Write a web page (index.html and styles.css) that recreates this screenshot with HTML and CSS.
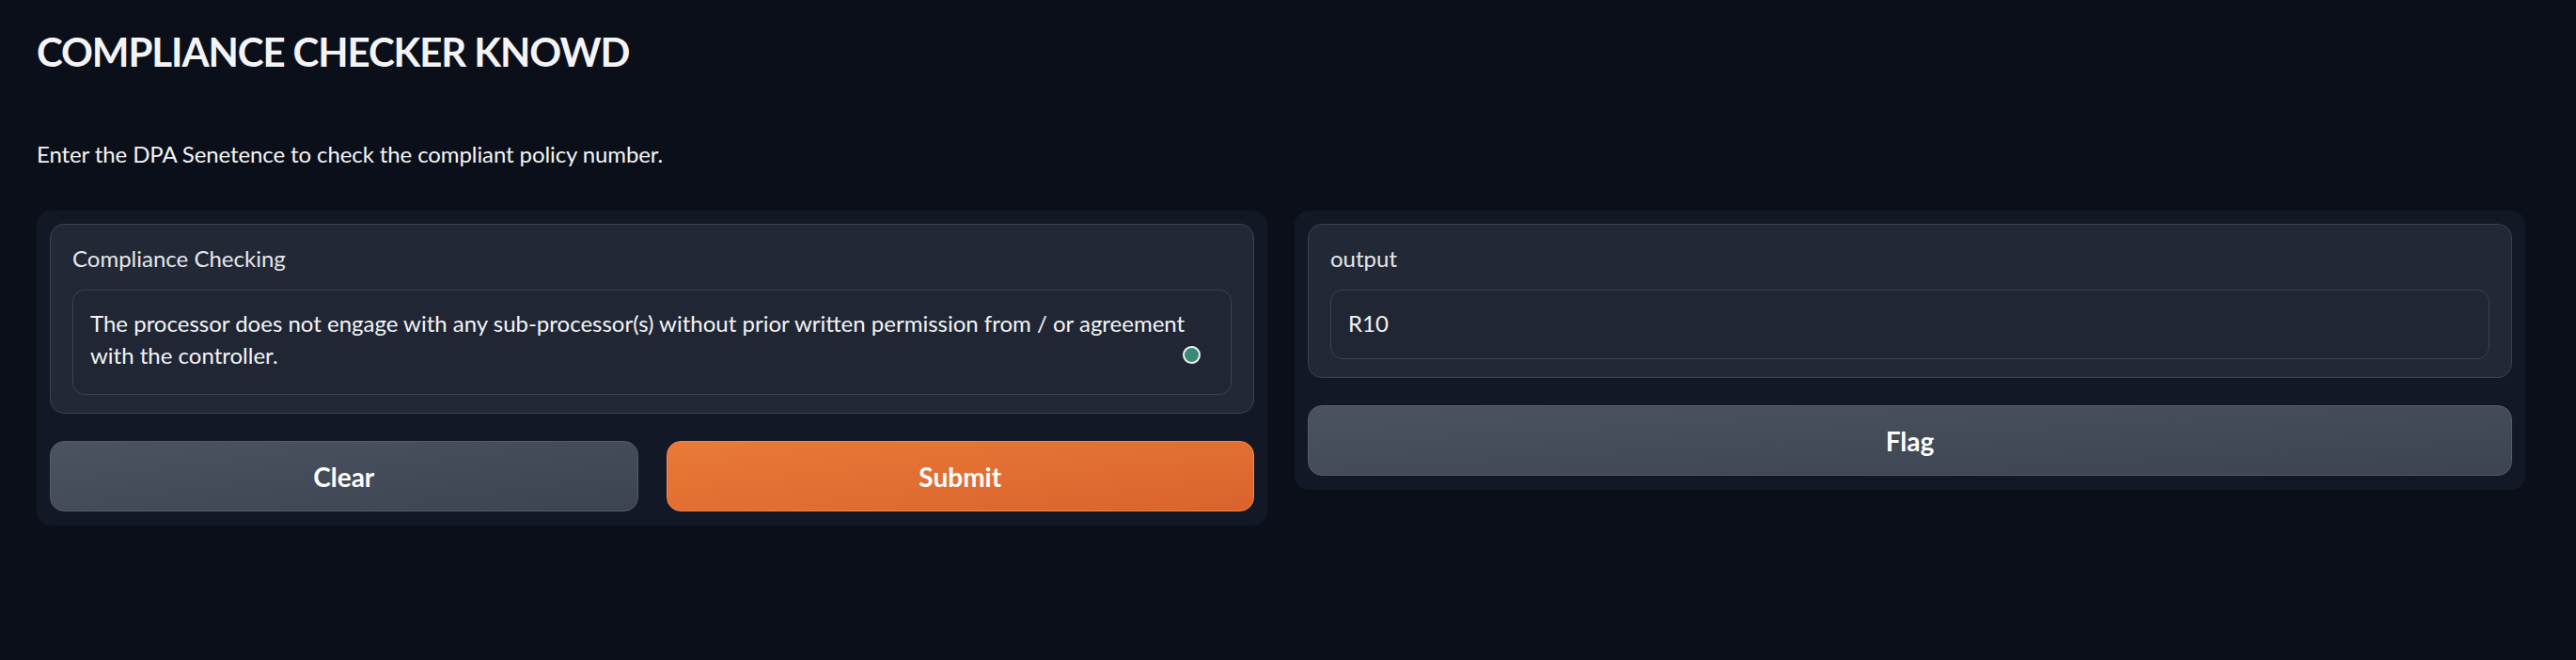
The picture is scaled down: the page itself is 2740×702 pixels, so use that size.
FILE: index.html
```html
<!DOCTYPE html>
<html lang="en">
<head>
<meta charset="utf-8">
<title>COMPLIANCE CHECKER KNOWD</title>
<link rel="stylesheet" href="styles.css">
</head>
<body>
<div class="app">
  <h1 class="title">COMPLIANCE CHECKER KNOWD</h1>
  <p class="desc">Enter the DPA Senetence to check the compliant policy number.</p>
  <div class="row">
    <div class="panel">
      <div class="block">
        <div class="label">Compliance Checking</div>
        <div class="textarea">The processor does not engage with any sub-processor(s) without prior written permission from / or agreement with the controller.<span class="dot"></span></div>
      </div>
      <div class="btn-row">
        <button class="btn secondary">Clear</button>
        <button class="btn primary">Submit</button>
      </div>
    </div>
    <div class="panel">
      <div class="block">
        <div class="label">output</div>
        <div class="input">R10</div>
      </div>
      <button class="btn secondary">Flag</button>
    </div>
  </div>
</div>
</body>
</html>
```

FILE: styles.css
```css
* { box-sizing: border-box; }
html, body { margin: 0; padding: 0; }
body {
  background: #0b0f19;
  color: #f3f4f6;
  font-family: Lato, "Noto Sans", sans-serif;
  width: 2740px;
  height: 702px;
  overflow: hidden;
}
.app {
  padding: 29px 54px 0 39px;
}
.title {
  margin: 0;
  font-size: 42px;
  line-height: 52px;
  letter-spacing: -1.1px;
  font-weight: 700;
  color: #f3f4f6;
}
.desc {
  margin: 68px 0 0 0;
  font-size: 24px;
  line-height: 30px;
  letter-spacing: -0.1px;
  color: #f3f4f6;
}
.row {
  margin-top: 45px;
  display: flex;
  align-items: flex-start;
  gap: 29px;
}
.panel {
  flex: 1 1 0;
  background: #121825;
  border-radius: 15px;
  padding: 14px 14px 15px 14px;
  display: flex;
  flex-direction: column;
  gap: 29px;
}
.block {
  background: #222836;
  border: 1px solid #3a4150;
  border-radius: 15px;
  padding: 19px 23px 19px 23px;
}
.label {
  font-size: 24px;
  line-height: 34px;
  color: #e5e7eb;
  margin-bottom: 16px;
}
.textarea, .input {
  position: relative;
  background: #202634;
  border: 1px solid #3a4150;
  border-radius: 13px;
  font-size: 24px;
  line-height: 34px;
  color: #f3f4f6;
}
.textarea {
  padding: 18px 30px 24px 18px;
}
.input {
  padding: 18px 18px 20px 18px;
}
.dot {
  position: absolute;
  right: 32px;
  bottom: 32px;
  width: 19px;
  height: 19px;
  border-radius: 50%;
  background: #3b8a77;
  border: 2px solid #eef2f1;
}
.btn-row {
  display: flex;
  gap: 30px;
}
.btn {
  flex: 1 1 0;
  height: 75px;
  border-radius: 15px;
  font-family: Lato, "Noto Sans", sans-serif;
  font-size: 28px;
  font-weight: 700;
  color: #ffffff;
  cursor: pointer;
  padding: 0;
}
.panel > .btn { flex: none; width: 100%; }
.secondary {
  background: linear-gradient(to bottom right, #4b5360, #3c4352);
  border: 1px solid #545c6a;
}
.primary {
  background: linear-gradient(to bottom right, #e97a37, #da632d);
  border: 1px solid #ef8a4a;
}
```
